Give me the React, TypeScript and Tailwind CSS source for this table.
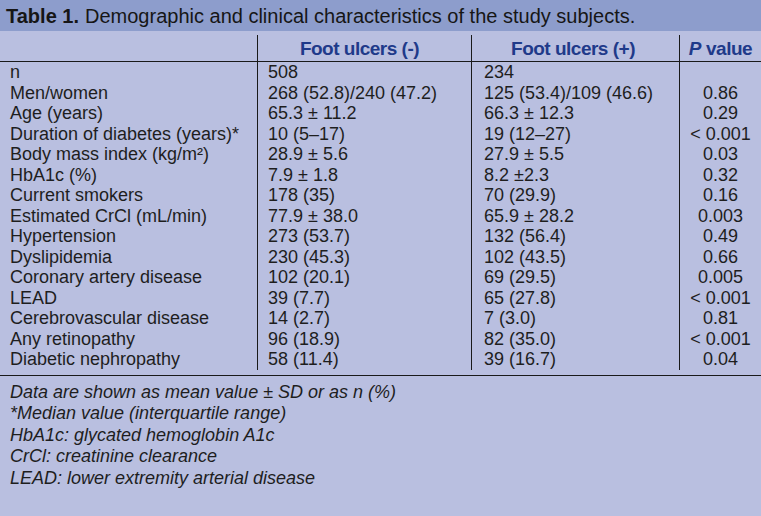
import React from 'react';

const rows: [string, string, string, string][] = [
    ['n', '508', '234', ''],
    ['Men/women', '268 (52.8)/240 (47.2)', '125 (53.4)/109 (46.6)', '0.86'],
    ['Age (years)', '65.3 ± 11.2', '66.3 ± 12.3', '0.29'],
    ['Duration of diabetes (years)*', '10 (5–17)', '19 (12–27)', '< 0.001'],
    ['Body mass index (kg/m²)', '28.9 ± 5.6', '27.9 ± 5.5', '0.03'],
    ['HbA1c (%)', '7.9 ± 1.8', '8.2 ±2.3', '0.32'],
    ['Current smokers', '178 (35)', '70 (29.9)', '0.16'],
    ['Estimated CrCl (mL/min)', '77.9 ± 38.0', '65.9 ± 28.2', '0.003'],
    ['Hypertension', '273 (53.7)', '132 (56.4)', '0.49'],
    ['Dyslipidemia', '230 (45.3)', '102 (43.5)', '0.66'],
    ['Coronary artery disease', '102 (20.1)', '69 (29.5)', '0.005'],
    ['LEAD', '39 (7.7)', '65 (27.8)', '< 0.001'],
    ['Cerebrovascular disease', '14 (2.7)', '7 (3.0)', '0.81'],
    ['Any retinopathy', '96 (18.9)', '82 (35.0)', '< 0.001'],
    ['Diabetic nephropathy', '58 (11.4)', '39 (16.7)', '0.04'],
];

const notes = [
    'Data are shown as mean value ± SD or as n (%)',
    '*Median value (interquartile range)',
    'HbA1c: glycated hemoglobin A1c',
    'CrCl: creatinine clearance',
    'LEAD: lower extremity arterial disease',
];

export default function App() {
    return (
        <div className="w-[761px] h-[516px] bg-[#b9bfe0] text-[#1e1e1e] font-['Liberation_Sans',Arial,sans-serif] overflow-hidden">
            <div className="h-[31px] bg-[#8d9dcc] pl-[6px] flex items-center text-[20px] text-[#161616] whitespace-nowrap">
                <span className="font-bold mr-[6px]">Table 1.</span>
                <span>Demographic and clinical characteristics of the study subjects.</span>
            </div>

            <div className="grid grid-cols-[257px_214px_208px_1fr] h-[31px] border-b border-[#1a1a1a] text-[#1f3a8a] font-bold text-[19px] tracking-[-0.5px]">
                <div />
                <div className="mt-[4px] border-l border-[#1a1a1a] flex items-center justify-center pb-[6px] pr-[10px]">Foot ulcers (-)</div>
                <div className="mt-[4px] border-l border-[#1a1a1a] flex items-center justify-center pb-[6px] pr-[5px]">Foot ulcers (+)</div>
                <div className="mt-[4px] border-l border-[#1a1a1a] flex items-center justify-center pb-[6px]">
                    <span className="italic mr-[5px]">P</span>value
                </div>
            </div>

            <div className="grid grid-cols-[257px_214px_208px_1fr] border-b border-[#1a1a1a] text-[18px] pb-[5px]">
                <div className="flex flex-col pl-[10px]">
                    {rows.map((r) => (
                        <div key={r[0]} className="h-[20.5px] leading-[20.5px] whitespace-nowrap">{r[0]}</div>
                    ))}
                </div>
                <div className="flex flex-col border-l border-[#1a1a1a] pl-[10px]">
                    {rows.map((r) => (
                        <div key={r[0]} className="h-[20.5px] leading-[20.5px] whitespace-nowrap">{r[1]}</div>
                    ))}
                </div>
                <div className="flex flex-col border-l border-[#1a1a1a] pl-[12px]">
                    {rows.map((r) => (
                        <div key={r[0]} className="h-[20.5px] leading-[20.5px] whitespace-nowrap">{r[2]}</div>
                    ))}
                </div>
                <div className="flex flex-col border-l border-[#1a1a1a] items-center">
                    {rows.map((r) => (
                        <div key={r[0]} className="h-[20.5px] leading-[20.5px] whitespace-nowrap">{r[3]}</div>
                    ))}
                </div>
            </div>

            <div className="pt-[6px] pl-[10px] italic text-[18px]">
                {notes.map((n) => (
                    <div key={n} className="h-[21.5px] leading-[21.5px] whitespace-nowrap">{n}</div>
                ))}
            </div>
        </div>
    );
}
